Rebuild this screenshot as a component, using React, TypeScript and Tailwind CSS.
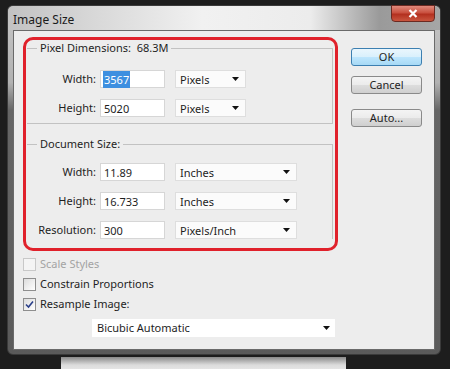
import React from 'react';

const font = { fontFamily: '"Noto Sans", "DejaVu Sans", sans-serif' };

const Arrow = () => (
    <svg width="7" height="4" viewBox="0 0 7 4" className="shrink-0">
        <path d="M0 0 L7 0 L3.5 4 Z" fill="#111" />
    </svg>
);

const Field = ({ value, selected = false }: { value: string; selected?: boolean }) => (
    <div className="w-[65px] h-[18px] bg-white border border-[#d6d6d6] flex items-center pl-[2px] text-[11px] leading-none text-[#1e1e1e]">
        {selected ? <span className="bg-[#3d8fe0] text-white px-[1px] py-[3px]">{value}</span> : <span className="px-[1px]">{value}</span>}
    </div>
);

const Select = ({ value, width }: { value: string; width: string }) => (
    <div className={`${width} h-[18px] bg-[#fbfbfb] border border-[#dedede] flex items-center justify-between pl-[4px] pr-[6px] text-[11px] leading-none text-[#1e1e1e]`}>
        <span>{value}</span>
        <Arrow />
    </div>
);

const Row = ({ label, value, unit, unitWidth, selected }: { label: string; value: string; unit: string; unitWidth: string; selected?: boolean }) => (
    <div className="flex items-center h-[18px]">
        <span className="w-[59px] text-right text-[11px] text-[#1e1e1e]">{label}</span>
        <div className="ml-[4px]"><Field value={value} selected={selected} /></div>
        <div className="ml-[10px]"><Select value={unit} width={unitWidth} /></div>
    </div>
);

const Button = ({ children, primary = false }: { children: React.ReactNode; primary?: boolean }) => (
    <div
        className={
            primary
                ? 'w-[71px] h-[18px] rounded-[3px] border border-[#3c7fb1] bg-[linear-gradient(180deg,#eaf6fd_0%,#d9f0fc_50%,#bee6fd_51%,#a7d9f5_100%)] flex items-center justify-center text-[11px] text-[#1e1e1e]'
                : 'w-[71px] h-[18px] rounded-[3px] border border-[#8a8a8a] bg-[linear-gradient(180deg,#f4f4f4_0%,#ebebeb_50%,#dddddd_51%,#cfcfcf_100%)] flex items-center justify-center text-[11px] text-[#1e1e1e]'
        }
    >
        {children}
    </div>
);

const Check = ({ label, checked = false, disabled = false }: { label: string; checked?: boolean; disabled?: boolean }) => (
    <div className="flex items-center h-[20px] gap-[4px]">
        <div
            className={
                disabled
                    ? 'w-[13px] h-[13px] border border-[#c8c8c8] bg-[#f4f4f4]'
                    : 'w-[13px] h-[13px] border border-[#8e8e8e] bg-[linear-gradient(135deg,#dcdcdc,#ffffff)] flex items-center justify-center'
            }
        >
            {checked && (
                <svg width="9" height="9" viewBox="0 0 9 9">
                    <path d="M1 4.5 L3.5 7 L8 1.5" stroke="#2a3f8a" strokeWidth="1.6" fill="none" />
                </svg>
            )}
        </div>
        <span className={disabled ? 'text-[11px] text-[#a3a3a3]' : 'text-[11px] text-[#1e1e1e]'}>{label}</span>
    </div>
);

export default function App() {
    return (
        <div className="w-[450px] h-[369px] bg-[#1d1d1d] overflow-hidden pt-[5px]" style={font}>
            {/* Window */}
            <div className="ml-[7px] w-[434px] h-[350px] rounded-[6px] border border-[#3a3a3a] bg-[linear-gradient(180deg,#c6c6c6_0%,#b2b2b2_22%,#666666_30%,#5a5a5a_100%)] flex flex-col px-[5px] pb-[4px]">
                {/* Title bar */}
                <div className="h-[24px] -mx-[5px] px-[5px] rounded-t-[6px] bg-[linear-gradient(90deg,#c2c2c2_0%,#d8d8d8_20%,#f1f1f1_45%,#ececec_70%,#9a9a9a_86%,#a6a6a6_100%)] flex items-start justify-between">
                    <span className="text-[12px] text-[#1a1a1a] mt-[5px]">Image Size</span>
                    <div className="w-[44px] h-[17px] -mt-[1px] rounded-b-[4px] border border-[#6b2a22] bg-[linear-gradient(180deg,#e08a7c_0%,#c9503f_45%,#b3301f_55%,#c9553f_100%)] flex items-center justify-center">
                        <svg width="10" height="9" viewBox="0 0 10 9">
                            <path d="M1.5 1 L8.5 8 M8.5 1 L1.5 8" stroke="#ffffff" strokeWidth="2.2" />
                        </svg>
                    </div>
                </div>

                {/* Content */}
                <div className="flex-1 border border-[#6a6a6a] bg-[#ededed] flex flex-col pl-[9px] pr-[12px]">
                    <div className="flex gap-[13px]">
                        {/* Red highlight */}
                        <div className="mt-[6px] w-[316px] h-[214px] border-[3px] border-[#e0212b] rounded-[10px] flex flex-col">
                            <fieldset className="ml-[1px] mr-[2px] border-t border-r border-b border-l-0 border-[#c2c2c2] pl-[10px] pt-[14px] pb-[6px] flex flex-col gap-[11px]">
                                <legend className="px-[3px] h-[16px] leading-[16px] text-[11px] text-[#1e1e1e]">Pixel Dimensions:&nbsp; 68.3M</legend>
                                <Row label="Width:" value="3567" unit="Pixels" unitWidth="w-[71px]" selected />
                                <Row label="Height:" value="5020" unit="Pixels" unitWidth="w-[71px]" />
                            </fieldset>
                            <fieldset className="mt-[12px] ml-[1px] mr-[2px] border-t border-r border-b-0 border-l-0 border-[#c2c2c2] pl-[10px] pt-[11px] flex flex-col gap-[11px]">
                                <legend className="px-[3px] h-[16px] leading-[16px] text-[11px] text-[#1e1e1e]">Document Size:</legend>
                                <Row label="Width:" value="11.89" unit="Inches" unitWidth="w-[122px]" />
                                <Row label="Height:" value="16.733" unit="Inches" unitWidth="w-[122px]" />
                                <Row label="Resolution:" value="300" unit="Pixels/Inch" unitWidth="w-[122px]" />
                            </fieldset>
                        </div>

                        {/* Buttons */}
                        <div className="mt-[17px] flex flex-col">
                            <Button primary>OK</Button>
                            <div className="mt-[10px]"><Button>Cancel</Button></div>
                            <div className="mt-[15px]"><Button>Auto...</Button></div>
                        </div>
                    </div>

                    <div className="mt-[3px] flex flex-col">
                        <Check label="Scale Styles" disabled />
                        <Check label="Constrain Proportions" />
                        <Check label="Resample Image:" checked />
                    </div>

                    <div className="mt-[5px] ml-[69px] w-[243px] h-[18px] bg-white flex items-center justify-between pl-[5px] pr-[5px] text-[11px] text-[#1e1e1e]">
                        <span>Bicubic Automatic</span>
                        <Arrow />
                    </div>
                </div>
            </div>

            {/* Page behind the dialog */}
            <div className="mt-[2px] ml-[61px] w-[285px] h-[20px] bg-[linear-gradient(180deg,#8a8a8a_0%,#dcdcdc_40%,#f5f5f5_100%)]" />
        </div>
    );
}
